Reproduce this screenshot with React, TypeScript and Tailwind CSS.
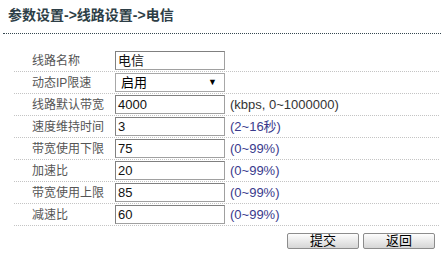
import React from 'react';

interface FieldRow {
    label: string;
    value: string;
    hint?: string;
    hintBlue?: boolean;
    select?: boolean;
}

const rows: FieldRow[] = [
    { label: '线路名称', value: '电信' },
    { label: '动态IP限速', value: '启用', select: true },
    { label: '线路默认带宽', value: '4000', hint: '(kbps, 0~1000000)' },
    { label: '速度维持时间', value: '3', hint: '(2~16秒)', hintBlue: true },
    { label: '带宽使用下限', value: '75', hint: '(0~99%)', hintBlue: true },
    { label: '加速比', value: '20', hint: '(0~99%)', hintBlue: true },
    { label: '带宽使用上限', value: '85', hint: '(0~99%)', hintBlue: true },
    { label: '减速比', value: '60', hint: '(0~99%)', hintBlue: true },
];

const font = "font-['Liberation_Sans','Noto_Sans_CJK_SC',sans-serif]";

export default function App() {
    return (
        <div className={`w-[444px] h-[254px] bg-white overflow-hidden ${font}`}>
            <div className="h-[33px] pl-[8px] pt-[6px] text-[14px] font-bold text-[#2d3e46] leading-[18px]">
                参数设置-&gt;线路设置-&gt;电信
            </div>
            <div className="mx-[3px] border-t border-dotted border-[#35474f]" />

            <div className="ml-[14px] mr-[5px] mt-[16px]">
                {rows.map(row => (
                    <div key={row.label} className="h-[22px] flex items-center border-b border-dotted border-[#c4c4c4]">
                        <div className="w-[101px] pl-[18px] text-[12px] text-[#555]">{row.label}</div>
                        {row.select ? (
                            <div className="w-[110px] h-[19px] border border-[#a8a8a8] flex items-center justify-between px-[5px] text-[13px] text-black">
                                <span>{row.value}</span>
                                <span className="text-[9px] mr-[2px]">▼</span>
                            </div>
                        ) : (
                            <div className="w-[110px] h-[19px] border border-[#a0a0a0] border-t-[#808080] border-l-[#808080] flex items-center pl-[2px] text-[13px] text-[#111]">
                                {row.value}
                            </div>
                        )}
                        {row.hint && (
                            <div className={`ml-[5px] text-[13px] ${row.hintBlue ? 'text-[#3a3a8c]' : 'text-[#333]'}`}>
                                {row.hint}
                            </div>
                        )}
                    </div>
                ))}
            </div>

            <div className="flex justify-end gap-[4px] mr-[9px] mt-[7px]">
                <button className="w-[72px] h-[16px] border border-[#8c8c8c] rounded-[2px] bg-gradient-to-b from-[#fdfdfd] to-[#d6d6d6] text-[13px] leading-[14px] text-black">
                    提交
                </button>
                <button className="w-[72px] h-[16px] border border-[#8c8c8c] rounded-[2px] bg-gradient-to-b from-[#fdfdfd] to-[#d6d6d6] text-[13px] leading-[14px] text-black">
                    返回
                </button>
            </div>
        </div>
    );
}
